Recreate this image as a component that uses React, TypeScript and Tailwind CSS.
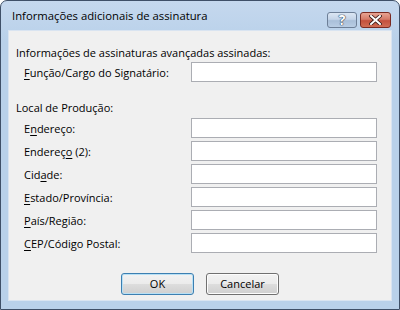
import React from "react";

const font = { fontFamily: '"Open Sans", "Noto Sans", sans-serif' };

function U({ children }: { children: React.ReactNode }) {
  return <span className="underline underline-offset-[2px] decoration-[1px]">{children}</span>;
}

function Field({ label }: { label: React.ReactNode }) {
  return (
    <div className="flex items-center h-[20px]">
      <div className="w-[182px] pl-[15px] leading-none">{label}</div>
      <div className="w-[186px] h-[20px] bg-white border border-[#abadb3]" />
    </div>
  );
}

export default function App() {
  return (
    <div
      className="w-[400px] h-[310px] flex flex-col border border-[#3f5068] rounded-t-[7px] overflow-hidden bg-[linear-gradient(to_bottom,#c5d8ee_0px,#b9d1ea_40px,#b9d1ea_100%)] text-[#000]"
      style={font}
    >
      {/* title bar */}
      <div className="h-[29px] flex items-center justify-between pl-[11px] pr-[8px] pt-[2px] shrink-0">
        <div className="text-[11.3px] text-black">Informações adicionais de assinatura</div>
        <div className="flex items-start gap-[3px] self-start mt-[9px]">
          <div className="w-[30px] h-[16px] rounded-[3px] border border-[#6d7f97] bg-[linear-gradient(to_bottom,#dbe6f3_0%,#c4d4e8_45%,#a9bfd9_55%,#b9cde4_100%)] flex items-center justify-center">
            <span className="text-[14px] font-bold leading-none text-white" style={{ textShadow: "0 0 1px #2a3a55, 0 0 1px #2a3a55, 0 0 1px #2a3a55" }}>?</span>
          </div>
          <div className="w-[31px] h-[16px] rounded-[3px] border border-[#7a2a22] bg-[linear-gradient(to_bottom,#e8a493_0%,#d47a68_45%,#c4503d_55%,#d06d55_100%)] flex items-center justify-center">
            <svg width="13" height="10" viewBox="0 0 13 10">
              <path d="M2 1 L11 9 M11 1 L2 9" stroke="#3b1a16" strokeWidth="3.6" strokeLinecap="square" />
              <path d="M2 1 L11 9 M11 1 L2 9" stroke="#ffffff" strokeWidth="2" strokeLinecap="square" />
            </svg>
          </div>
        </div>
      </div>
      {/* content */}
      <div className="ml-[7px] mr-[7px] h-[271px] bg-[#f0f0f0] border border-[#d9e4f1] text-[11px] flex flex-col">
        <div className="pl-[7px] mt-[15px] h-[14px] flex items-center">Informações de assinaturas avançadas assinadas:</div>
        <div className="mt-[2px] flex flex-col">
          <Field label={<><U>F</U>unção/Cargo do Signatário:</>} />
        </div>
        <div className="pl-[7px] mt-[19px] h-[14px] flex items-center">Local de Produção:</div>
        <div className="mt-[3px] flex flex-col gap-[3px]">
          <Field label={<>E<U>n</U>dereço:</>} />
          <Field label={<>Endereç<U>o</U> (2):</>} />
          <Field label={<>Cid<U>a</U>de:</>} />
          <Field label={<><U>E</U>stado/Província:</>} />
          <Field label={<><U>P</U>aís/Região:</>} />
          <Field label={<><U>C</U>EP/Código Postal:</>} />
        </div>
        <div className="flex justify-center gap-[12px] mt-[20px]">
          <div className="w-[73px] h-[22px] rounded-[3px] border border-[#3c7fb1] bg-[linear-gradient(to_bottom,#f2f2f2_0%,#ebebeb_50%,#dddddd_51%,#cfcfcf_100%)] shadow-[inset_0_0_0_1px_#b8e0f5] flex items-center justify-center">OK</div>
          <div className="w-[73px] h-[22px] rounded-[3px] border border-[#707070] bg-[linear-gradient(to_bottom,#f2f2f2_0%,#ebebeb_50%,#dddddd_51%,#cfcfcf_100%)] shadow-[inset_0_0_0_1px_#fcfcfc] flex items-center justify-center">Cancelar</div>
        </div>
      </div>
    </div>
  );
}
